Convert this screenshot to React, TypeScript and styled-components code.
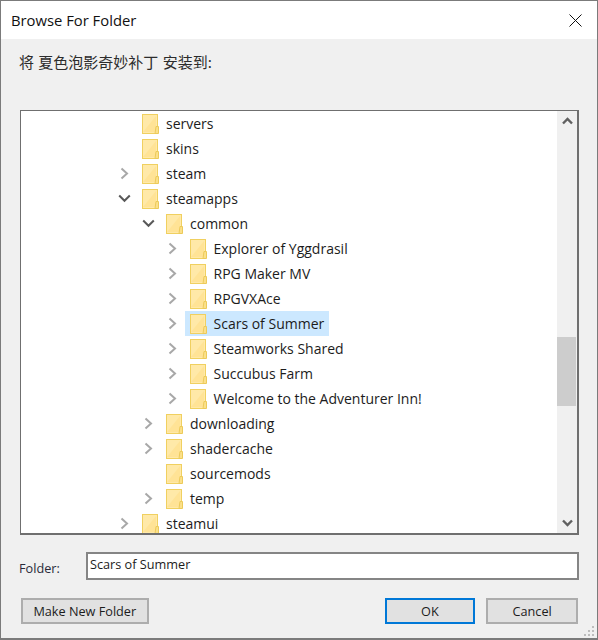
import * as React from 'react';
import styled, { createGlobalStyle } from 'styled-components';

const GlobalStyle = createGlobalStyle`
  html, body {
    margin: 0;
    padding: 0;
    background: #f0f0f0;
  }
  * {
    box-sizing: border-box;
  }
`;

const uiFont = `"Open Sans", "Noto Sans", "Noto Sans CJK SC", sans-serif`;

const Window = styled.div`
  position: relative;
  width: 598px;
  height: 640px;
  display: flex;
  flex-direction: column;
  background: #f0f0f0;
  border: 1px solid #7b7b7b;
  border-bottom-width: 2px;
  font-family: ${uiFont};
  font-size: 14px;
  color: #1a1a1a;
  overflow: hidden;
`;

const TitleBar = styled.div`
  height: 38px;
  flex: none;
  display: flex;
  align-items: center;
  justify-content: space-between;
  padding: 0 15px 0 10px;
  background: #fff;
  font-size: 14.8px;
  color: #111;
`;

const Body = styled.div`
  flex: 1;
  display: flex;
  flex-direction: column;
  padding: 12px 18px 14px 19px;
`;

const Prompt = styled.div`
  height: 59px;
  margin-left: -1px;
  flex: none;
  font-family: "Noto Sans CJK SC", sans-serif;
  font-size: 15px;
  line-height: 21px;
  word-spacing: 1px;
  color: #2c2c2c;
`;

const TreeBox = styled.div`
  height: 425px;
  flex: none;
  display: flex;
  background: #fff;
  border: 1px solid #6f6f6f;
  border-right-width: 2px;
  border-bottom-width: 2px;
`;

const TreeList = styled.div`
  flex: 1;
  overflow: hidden;
`;

const Row = styled.div<{ $depth: number }>`
  height: 25px;
  display: flex;
  align-items: center;
  padding-left: ${(p) => 94 + p.$depth * 24}px;
`;

const Twisty = styled.div`
  width: 18px;
  height: 25px;
  margin-right: 4px;
  flex: none;
  display: flex;
  align-items: center;
  justify-content: center;
`;

const Item = styled.div<{ $selected?: boolean }>`
  height: 25px;
  display: flex;
  align-items: center;
  gap: 7px;
  padding: 0 5px;
  background: ${(p) => (p.$selected ? '#cce8ff' : 'transparent')};
`;

const ItemLabel = styled.span<{ $deep?: boolean }>`
  white-space: nowrap;
  color: #1c1c1c;
  margin-left: ${(p) => (p.$deep ? '-0.5px' : '0')};
`;

const ScrollBar = styled.div`
  width: 20px;
  flex: none;
  display: flex;
  flex-direction: column;
  background: #f0f0f0;
`;

const ScrollButton = styled.div`
  height: 20px;
  flex: none;
  display: flex;
  align-items: center;
  justify-content: center;
`;

const ScrollTrack = styled.div`
  flex: 1;
  padding-top: 206px;
`;

const ScrollThumb = styled.div`
  width: 19px;
  height: 69px;
  background: #cdcdcd;
`;

const FolderRow = styled.div`
  height: 28px;
  margin: 17px 0 0 -1px;
  flex: none;
  display: flex;
  align-items: center;
  font-size: 12.7px;
`;

const FolderLabel = styled.label`
  width: 67px;
  flex: none;
  padding-top: 3px;
  color: #2a2a3a;
`;

const FolderInput = styled.div`
  width: 493px;
  height: 28px;
  padding: 0 2px;
  background: #fff;
  border: 2px solid #858585;
  line-height: 20px;
  color: #1c1c1c;
`;

const ButtonRow = styled.div`
  margin-top: 18px;
  padding: 0 1px;
  flex: none;
  display: flex;
  align-items: center;
`;

const DialogButton = styled.button<{ $primary?: boolean; $width: number; $left?: number }>`
  width: ${(p) => p.$width}px;
  height: 26px;
  margin-left: ${(p) => p.$left ?? 0}px;
  padding: 0;
  font-family: ${uiFont};
  font-size: 12.7px;
  color: #1c1c1c;
  background: #e1e1e1;
  border: 2px solid ${(p) => (p.$primary ? '#0078d7' : '#adadad')};
`;

const Grip = styled.svg`
  position: absolute;
  right: 2px;
  bottom: 1px;
`;

type Node = { name: string; depth: number; twisty?: 'closed' | 'open'; selected?: boolean };

const nodes: Node[] = [
  { name: 'servers', depth: 0 },
  { name: 'skins', depth: 0 },
  { name: 'steam', depth: 0, twisty: 'closed' },
  { name: 'steamapps', depth: 0, twisty: 'open' },
  { name: 'common', depth: 1, twisty: 'open' },
  { name: 'Explorer of Yggdrasil', depth: 2, twisty: 'closed' },
  { name: 'RPG Maker MV', depth: 2, twisty: 'closed' },
  { name: 'RPGVXAce', depth: 2, twisty: 'closed' },
  { name: 'Scars of Summer', depth: 2, twisty: 'closed', selected: true },
  { name: 'Steamworks Shared', depth: 2, twisty: 'closed' },
  { name: 'Succubus Farm', depth: 2, twisty: 'closed' },
  { name: 'Welcome to the Adventurer Inn!', depth: 2, twisty: 'closed' },
  { name: 'downloading', depth: 1, twisty: 'closed' },
  { name: 'shadercache', depth: 1, twisty: 'closed' },
  { name: 'sourcemods', depth: 1 },
  { name: 'temp', depth: 1, twisty: 'closed' },
  { name: 'steamui', depth: 0, twisty: 'closed' },
];

const FolderIcon = () => (
  <svg width="17" height="20" viewBox="0 0 17 20" style={{ flex: 'none' }}>
    <rect x="0.5" y="0.5" width="15" height="19" fill="#ffe9a8" stroke="#f0d060" />
    <path d="M1 18 L14 2 V18 Z" fill="#ffe396" />
    <path d="M14 12.5 H16.5 V19.5 H13 Z" fill="#fbe08a" stroke="#ecca5a" />
  </svg>
);

const ClosedChevron = () => (
  <svg width="9" height="13" viewBox="0 0 9 13">
    <path d="M1.5 1.5 L7 6.5 L1.5 11.5" fill="none" stroke="#a8a8a8" strokeWidth="2" />
  </svg>
);

const OpenChevron = () => (
  <svg width="13" height="9" viewBox="0 0 13 9">
    <path d="M1.2 1.5 L6.5 6.8 L11.8 1.5" fill="none" stroke="#595959" strokeWidth="2" />
  </svg>
);

const CloseIcon = () => (
  <svg width="13" height="13" viewBox="0 0 13 13">
    <path d="M0.5 0.5 L12.5 12.5 M12.5 0.5 L0.5 12.5" stroke="#111" strokeWidth="1" />
  </svg>
);

const ScrollArrow = ({ up }: { up?: boolean }) => (
  <svg width="11" height="8" viewBox="0 0 11 8">
    <path
      d={up ? 'M1 6.5 L5.5 2 L10 6.5' : 'M1 1.5 L5.5 6 L10 1.5'}
      fill="none"
      stroke="#606060"
      strokeWidth="2.4"
    />
  </svg>
);

export default function App() {
  return (
    <>
      <GlobalStyle />
      <Window>
        <TitleBar>
          <span>Browse For Folder</span>
          <CloseIcon />
        </TitleBar>
        <Body>
          <Prompt>将 夏色泡影奇妙补丁 安装到:</Prompt>
          <TreeBox>
            <TreeList>
              {nodes.map((node) => (
                <Row key={node.name} $depth={node.depth}>
                  <Twisty>
                    {node.twisty === 'closed' && <ClosedChevron />}
                    {node.twisty === 'open' && <OpenChevron />}
                  </Twisty>
                  <Item $selected={node.selected}>
                    <FolderIcon />
                    <ItemLabel $deep={node.depth === 2}>{node.name}</ItemLabel>
                  </Item>
                </Row>
              ))}
            </TreeList>
            <ScrollBar>
              <ScrollButton>
                <ScrollArrow up />
              </ScrollButton>
              <ScrollTrack>
                <ScrollThumb />
              </ScrollTrack>
              <ScrollButton>
                <ScrollArrow />
              </ScrollButton>
            </ScrollBar>
          </TreeBox>
          <FolderRow>
            <FolderLabel>Folder:</FolderLabel>
            <FolderInput>Scars of Summer</FolderInput>
          </FolderRow>
          <ButtonRow>
            <DialogButton $width={128}>Make New Folder</DialogButton>
            <DialogButton $primary $width={91} $left={236}>
              OK
            </DialogButton>
            <DialogButton $width={92} $left={11}>
              Cancel
            </DialogButton>
          </ButtonRow>
        </Body>
        <Grip width="11" height="11" viewBox="0 0 11 11">
          <path
            d="M8 0h2v2H8zM4 4h2v2H4zM8 4h2v2H8zM0 8h2v2H0zM4 8h2v2H4zM8 8h2v2H8z"
            fill="#bdbdbd"
          />
        </Grip>
      </Window>
    </>
  );
}
